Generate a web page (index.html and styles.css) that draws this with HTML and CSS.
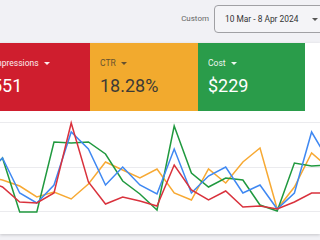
FILE: index.html
```html
<!DOCTYPE html>
<html>
<head>
<meta charset="utf-8">
<link rel="stylesheet" href="styles.css">
</head>
<body>
<div class="topbar">
  <span class="range-label">Custom</span>
  <div class="range-box">
    <span class="range-text">10 Mar - 8 Apr 2024</span>
    <span class="caret dark"></span>
  </div>
</div>
<div class="panel">
  <div class="cards">
    <div class="card red">
      <div class="label">Impressions <span class="caret"></span></div>
      <div class="value">551</div>
    </div>
    <div class="card yellow">
      <div class="label">CTR <span class="caret"></span></div>
      <div class="value">18.28%</div>
    </div>
    <div class="card green">
      <div class="label">Cost <span class="caret"></span></div>
      <div class="value">$229</div>
    </div>
  </div>
  <svg class="chart" width="320" height="123" viewBox="0 0 320 123">
    <g class="grid">
      <line x1="0" y1="11.5" x2="320" y2="11.5"/>
      <line x1="0" y1="56.5" x2="320" y2="56.5"/>
      <line x1="0" y1="100.5" x2="320" y2="100.5"/>
    </g>
    <polyline class="s-yellow" points="-14.7,65 2.5,69 19.7,75 36.8,86 54,81 71.2,88 88.4,73 105.5,51 122.7,59 139.9,67 157,58 174.2,82 191.4,89 208.5,58 225.7,72 242.9,51 260,37 277.2,98 294.4,76 311.6,42 328.7,57"/>
    <polyline class="s-green" points="-14.7,64 2.5,47 19.7,101 36.8,101 54,31 71.2,32 88.4,31 105.5,43 122.7,70 139.9,83 157,99 174.2,15 191.4,62 208.5,76 225.7,67 242.9,69 260,94 277.2,100 294.4,52 311.6,55 328.7,54"/>
    <polyline class="s-blue" points="-14.7,64 2.5,47 19.7,82 36.8,92 54,74 71.2,21 88.4,38 105.5,74 122.7,56 139.9,74 157,83 174.2,38 191.4,82 208.5,65 225.7,56 242.9,82 260,74 277.2,98 294.4,82 311.6,21 328.7,50"/>
    <polyline class="s-red" points="-14.7,69 2.5,76 19.7,91 36.8,92 54,82 71.2,12 88.4,71 105.5,93 122.7,86 139.9,90 157,95 174.2,54 191.4,79 208.5,89 225.7,80 242.9,96 260,95 277.2,98 294.4,91 311.6,82 328.7,82"/>
  </svg>
</div>
</body>
</html>
```
FILE: styles.css
```css
html, body {
  margin: 0;
  padding: 0;
}
body {
  width: 320px;
  height: 240px;
  overflow: hidden;
  background: #f1f1f5;
  font-family: Roboto, "Liberation Sans", sans-serif;
}
.topbar {
  height: 38px;
  padding-top: 5px;
  display: flex;
  justify-content: flex-end;
  align-items: flex-start;
  gap: 5px;
  margin-right: -10px;
}
.range-label {
  font-size: 8px;
  color: #666;
  line-height: 28px;
}
.range-box {
  box-sizing: border-box;
  width: 116px;
  height: 28px;
  border: 1px solid #a0a0a4;
  border-radius: 4px;
  background: #f4f4f7;
  display: flex;
  align-items: center;
  padding: 0 0 0 10px;
  gap: 14px;
  flex-shrink: 0;
}
.range-text {
  font-size: 8.4px;
  color: #333;
  white-space: nowrap;
}
.caret {
  display: inline-block;
  width: 0;
  height: 0;
  border-left: 3px solid transparent;
  border-right: 3px solid transparent;
  border-top: 3px solid currentColor;
  vertical-align: middle;
  margin-left: 3px;
}
.caret.dark {
  color: #555;
  margin-left: 0;
}
.panel {
  background: #fff;
  height: 191px;
  box-shadow: 0 1px 3px rgba(0, 0, 0, 0.18);
  overflow: hidden;
}
.cards {
  display: flex;
  height: 68px;
  margin-left: -18px;
}
.card {
  box-sizing: border-box;
  width: 108px;
  padding: 14px 10px 0;
  flex-shrink: 0;
}
.card.green {
  width: 107px;
}
.red {
  background: #cf1e2e;
  color: #fff;
}
.yellow {
  background: #f2aa2e;
  color: #3d3a36;
}
.green {
  background: #2a9c4a;
  color: #fff;
}
.label {
  font-size: 8.5px;
  line-height: 12px;
  white-space: nowrap;
  opacity: 0.92;
}
.yellow .label {
  color: #5b4a2e;
}
.value {
  font-size: 18px;
  line-height: 21px;
  margin-top: 6px;
  white-space: nowrap;
}
.chart {
  display: block;
}
.grid line {
  stroke: #ebebee;
  stroke-width: 1;
}
.chart polyline {
  fill: none;
  stroke-width: 1.5;
  stroke-linejoin: miter;
}
.s-yellow { stroke: #f7a933; }
.s-green { stroke: #20993f; }
.s-blue { stroke: #3f88f2; }
.s-red { stroke: #d9323d; }
```
